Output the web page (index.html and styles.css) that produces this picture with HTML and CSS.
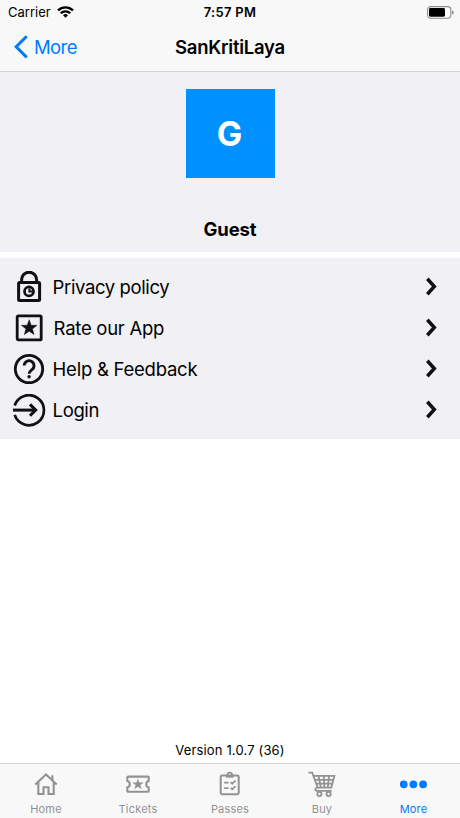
FILE: index.html
```html
<!DOCTYPE html>
<html lang="en">

<head>
    <meta charset="UTF-8">
    <title>SanKritiLaya</title>
    <link rel="stylesheet" href="styles.css">
</head>

<body>
    <header class="header">
        <div class="status-bar">
            <div class="carrier">
                <span class="carrier-name">Carrier</span>
                <svg class="wifi" width="17" height="12" viewBox="0 0 17 12" fill="none" stroke="#000" stroke-width="2.3">
                    <path d="M1 4.4a10.8 10.8 0 0 1 15 0" />
                    <path d="M3.7 7.3a6.8 6.8 0 0 1 9.6 0" />
                    <path d="M8.5 11.7L6 9.2a3.6 3.6 0 0 1 5 0z" fill="#000" stroke="none" />
                </svg>
            </div>
            <span class="time">7:57 PM</span>
            <svg class="battery" width="28" height="13" viewBox="0 0 28 13">
                <rect x=".6" y=".6" width="23.2" height="11.6" rx="3.2" fill="#fff" stroke="#8a8a8a" stroke-width="1.1" />
                <rect x="2" y="2.1" width="16" height="8.6" rx="1.4" fill="#000" />
                <path d="M25 4.4q1.8.6 1.8 2t-1.8 2z" fill="#8a8a8a" />
            </svg>
        </div>
        <nav class="nav-bar">
            <a class="back">
                <svg width="14" height="24" viewBox="0 0 14 24" fill="none" stroke="#007aff" stroke-width="3">
                    <path d="M12.7 1.2L2.2 11.8l10.5 10.6" />
                </svg>
                <span>More</span>
            </a>
            <h1 class="title">SanKritiLaya</h1>
        </nav>
    </header>

    <section class="profile">
        <div class="avatar">G</div>
        <p class="user-name">Guest</p>
    </section>

    <ul class="menu">
        <li class="menu-item">
            <svg class="menu-icon" width="34" height="33" viewBox="0 0 34 33" fill="none" stroke="#111114" stroke-width="3">
                <rect x="6.6" y="11.6" width="21" height="17.9" rx="1" />
                <path d="M9.6 11V8.8a7.5 7.6 0 0 1 15 0V11" />
                <circle cx="17" cy="20.4" r="4.5" stroke-width="2.7" />
                <path d="M17.4 17.6v3h2.6" stroke-width="2" />
            </svg>
            <span class="menu-text">Privacy policy</span>
            <svg class="chevron" width="13" height="19" viewBox="0 0 13 19"><path d="M2.3 1.8l7 7.7-7 7.7" /></svg>
        </li>
        <li class="menu-item">
            <svg class="menu-icon" width="34" height="33" viewBox="0 0 34 33" fill="none" stroke="#111114" stroke-width="2.8">
                <rect x="5.2" y="3.9" width="24" height="24" rx="1.2" />
                <path d="M17.2 7.8l2 5.5h5.8l-4.6 3.6 1.7 5.7-4.9-3.4-4.9 3.4 1.7-5.7-4.6-3.6h5.8z" fill="#111114" stroke="#111114" stroke-width=".5" />
            </svg>
            <span class="menu-text rate">Rate our App</span>
            <svg class="chevron" width="13" height="19" viewBox="0 0 13 19"><path d="M2.3 1.8l7 7.7-7 7.7" /></svg>
        </li>
        <li class="menu-item">
            <svg class="menu-icon" width="34" height="33" viewBox="0 0 34 33" fill="none" stroke="#111114" stroke-width="2.8">
                <circle cx="17" cy="16" r="13.7" />
                <path d="M12.2 12.6a4.9 4.9 0 1 1 7.8 4c-2 1.6-2.9 2.2-2.9 4.2" />
                <circle cx="17.1" cy="23.8" r="1.7" fill="#111114" stroke="none" />
            </svg>
            <span class="menu-text help">Help &amp; Feedback</span>
            <svg class="chevron" width="13" height="19" viewBox="0 0 13 19"><path d="M2.3 1.8l7 7.7-7 7.7" /></svg>
        </li>
        <li class="menu-item">
            <svg class="menu-icon" width="34" height="33" viewBox="0 0 34 33" fill="none" stroke="#111114" stroke-width="2.7">
                <path d="M2.7 11.5a15 15 0 1 1 0 9.4" />
                <path d="M1 16.1h22.5" stroke-width="3" />
                <path d="M18 10.4l5.7 5.7-5.7 5.7" stroke-width="3" />
            </svg>
            <span class="menu-text">Login</span>
            <svg class="chevron" width="13" height="19" viewBox="0 0 13 19"><path d="M2.3 1.8l7 7.7-7 7.7" /></svg>
        </li>
    </ul>

    <p class="version">Version 1.0.7 (36)</p>

    <footer class="tab-bar">
        <a class="tab">
            <svg width="28" height="28" viewBox="0 0 28 28" fill="none" stroke="#929292" stroke-width="2.1">
                <path d="M3.3 14.4L14 4.4l10.7 10M6.3 12v12h5.2v-6.8h5V24h5.2V12M20.4 5.2v5" />
            </svg>
            <span class="tab-label">Home</span>
        </a>
        <a class="tab">
            <svg width="28" height="28" viewBox="0 0 28 28" fill="none" stroke="#929292" stroke-width="2.1">
                <path d="M4.2 6.6h19.6q.9 0 .9.9V11a3.3 3.3 0 0 0 0 6.4v3.5q0 .9-.9.9H4.2q-.9 0-.9-.9v-3.5a3.3 3.3 0 0 0 0-6.4V7.5q0-.9.9-.9z" />
                <path d="M14 8.4l1.4 4h4.4l-3.4 2.7 1.2 4.2-3.6-2.5-3.6 2.5 1.2-4.2-3.4-2.7h4.4z" fill="#929292" stroke="none" />
            </svg>
            <span class="tab-label">Tickets</span>
        </a>
        <a class="tab">
            <svg width="28" height="28" viewBox="0 0 28 28" fill="none" stroke="#929292" stroke-width="2">
                <rect x="4.7" y="5.4" width="18" height="18.8" rx="1.4" />
                <path d="M10 6.4h7.5" stroke-width="2.6" />
                <path d="M11.3 5a2.4 2.4 0 0 1 4.8 0" stroke-width="1.6" />
                <path d="M8.2 12.6h4.3M8.2 18.2h4.3M14.7 12.2l1.6 1.5 3.2-3.2M14.7 17.9l1.6 1.5 3.2-3.2" stroke-width="1.7" />
            </svg>
            <span class="tab-label">Passes</span>
        </a>
        <a class="tab">
            <svg width="28" height="28" viewBox="0 0 28 28" fill="none" stroke="#929292" stroke-width="1.8">
                <path d="M.4 2.6h3.8l5.5 15h13.6l3.1-11.8H5.5M7 9.8h18M8.4 13.6h15.8M10.5 5.8l2.4 11.6M15.8 5.8l.5 11.6M21 5.8l-1.2 11.6M9.7 17.4c-2.6.6-3.4 3.4-.8 3.4h14.8" />
                <circle cx="11.4" cy="24" r="2.1" />
                <circle cx="20.6" cy="24" r="2.1" />
            </svg>
            <span class="tab-label">Buy</span>
        </a>
        <a class="tab active">
            <svg width="28" height="28" viewBox="0 0 28 28" fill="#007aff">
                <circle cx="3.7" cy="14.3" r="3.9" />
                <circle cx="13.4" cy="14.3" r="3.9" />
                <circle cx="23.1" cy="14.3" r="3.9" />
            </svg>
            <span class="tab-label">More</span>
        </a>
    </footer>
</body>

</html>
```

FILE: styles.css
```css
* {
    box-sizing: border-box;
}

body {
    display: flex;
    flex-direction: column;
    height: 818px;
    margin: 0;
    background-color: #fff;
    color: #000;
    font-family: Inter, "Liberation Sans", sans-serif;
}

svg {
    display: block;
    flex: none;
}

.header {
    height: 72px;
    background-color: #f8f8f8;
    border-bottom: 1px solid #d2d2d4;
}

.status-bar {
    display: grid;
    grid-template-columns: 1fr auto 1fr;
    align-items: center;
    height: 24px;
    padding: 0 5px 0 8px;
    font-size: 13px;
}

.carrier {
    display: flex;
    align-items: center;
    gap: 6px;
}

.carrier-name {
    letter-spacing: 0.02px;
}

.time {
    margin-right: 3px;
    font-weight: 600;
    letter-spacing: 0.3px;
}

.battery {
    justify-self: end;
}

.nav-bar {
    display: grid;
    grid-template-columns: 1fr auto 1fr;
    align-items: center;
    height: 46px;
    padding: 0 14px;
}

.back {
    display: flex;
    align-items: center;
    gap: 6px;
    color: #007aff;
    font-size: 18.5px;
    letter-spacing: -0.6px;
}

.title {
    margin: 0;
    font-size: 18.5px;
    font-weight: 600;
    letter-spacing: -0.25px;
}

.profile {
    display: flex;
    flex-direction: column;
    align-items: center;
    height: 180px;
    padding-top: 17px;
    background-color: #f0f0f5;
}

.avatar {
    display: flex;
    align-items: center;
    justify-content: center;
    width: 89px;
    height: 89px;
    padding-right: 1px;
    background-color: #0091ff;
    color: #fff;
    font-size: 34px;
    font-weight: 700;
}

.user-name {
    margin: 39px 0 0;
    font-size: 18.5px;
    font-weight: 700;
    line-height: 24px;
    letter-spacing: -0.1px;
}

.menu {
    height: 181px;
    margin: 6px 0 0;
    padding: 9px 22px 0 12px;
    background-color: #f0f0f5;
    list-style: none;
}

.menu-item {
    display: flex;
    align-items: center;
    height: 41px;
}

.menu-text {
    flex: 1;
    padding: 0 0 2px 6.6px;
    font-size: 18.5px;
    letter-spacing: -0.38px;
}

.rate {
    padding-left: 7.6px;
    letter-spacing: -0.26px;
}

.help {
    letter-spacing: -0.24px;
}

.chevron {
    margin-bottom: 2px;
    fill: none;
    stroke: #111114;
    stroke-width: 3.5;
}

.version {
    margin: auto 0 5px;
    font-size: 13px;
    line-height: 16px;
    letter-spacing: 0.15px;
    text-align: center;
}

.tab-bar {
    display: grid;
    grid-template-columns: repeat(5, 1fr);
    height: 55px;
    padding-top: 6px;
    background-color: #f8f8f8;
    border-top: 1px solid #d2d2d4;
}

.tab {
    display: flex;
    flex-direction: column;
    align-items: center;
    color: #929292;
    font-size: 11px;
    line-height: 14px;
    letter-spacing: 0.2px;
}

.tab-label {
    margin-top: 4px;
}

.active {
    padding-right: 1px;
    color: #007aff;
}
```
